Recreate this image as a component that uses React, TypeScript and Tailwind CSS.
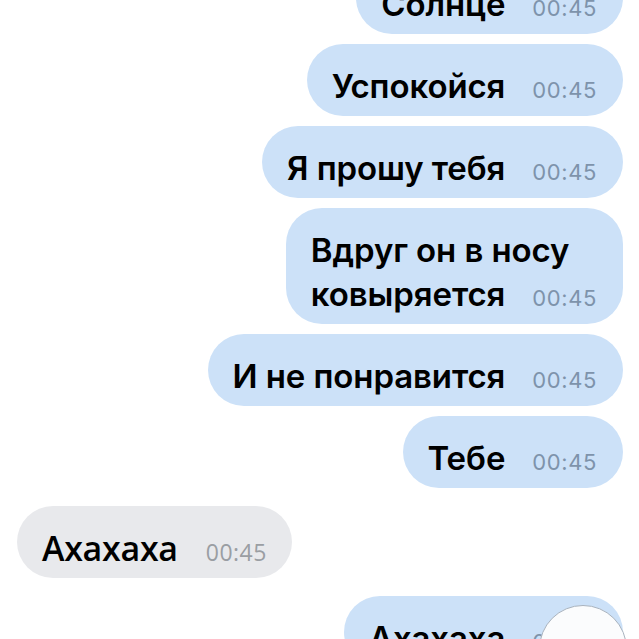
import React from "react";

type Msg = {
  lines: string[];
  out: boolean;
  time: string;
};

const MESSAGES: Msg[] = [
  { lines: ["Солнце"], out: true, time: "00:45" },
  { lines: ["Успокойся"], out: true, time: "00:45" },
  { lines: ["Я прошу тебя"], out: true, time: "00:45" },
  { lines: ["Вдруг он в носу", "ковыряется"], out: true, time: "00:45" },
  { lines: ["И не понравится"], out: true, time: "00:45" },
  { lines: ["Тебе"], out: true, time: "00:45" },
  { lines: ["Ахахаха"], out: false, time: "00:45" },
  { lines: ["Ахахаха"], out: true, time: "00:45" },
];

function Bubble({ msg }: { msg: Msg }) {
  const last = msg.lines.length - 1;

  if (!msg.out) {
    return (
      <div className="rounded-[36px] bg-[#e8e9ec] pl-[25px] pr-[25px] pt-[20px] pb-[8px] font-['Open_Sans',sans-serif]">
        <div className="flex items-baseline">
          <span className="text-[34px] leading-[44px] font-semibold tracking-[-0.3px] text-black">
            {msg.lines[0]}
          </span>
          <span className="ml-[28px] text-[23px] tracking-[0.5px] text-[#9a9ea3]">
            {msg.time}
          </span>
        </div>
      </div>
    );
  }

  return (
    <div className="rounded-[36px] bg-[#cce1f8] pl-[25px] pr-[26px] pt-[20px] pb-[8px] font-['Inter',sans-serif]">
      {msg.lines.map((line, i) =>
        i < last ? (
          <div
            key={i}
            className="text-[33px] leading-[44px] font-semibold text-black tracking-[-0.1px]"
          >
            {line}
          </div>
        ) : (
          <div key={i} className="flex items-baseline">
            <span className="text-[33px] leading-[44px] font-semibold text-black tracking-[-0.1px]">
              {line}
            </span>
            <span className="ml-[27px] text-[22px] tracking-[0.6px] text-[#7e93ab]">
              {msg.time}
            </span>
          </div>
        ),
      )}
    </div>
  );
}

export default function App() {
  return (
    <div className="relative h-[639px] w-[639px] overflow-hidden bg-white">
      <div className="-mt-[38px] flex flex-col items-end pl-[17px] pr-[16px]">
        {MESSAGES.map((m, i) => {
          const prev = MESSAGES[i - 1];
          const gap = !prev ? "" : prev.out !== m.out || !m.out ? "mt-[18px]" : "mt-[10px]";
          return (
            <div key={i} className={`${gap} ${m.out ? "" : "self-start"}`}>
              <Bubble msg={m} />
            </div>
          );
        })}
      </div>

      {/* scroll-down button */}
      <div className="absolute left-[539px] top-[605px] h-[88px] w-[88px] rounded-full border border-[#a9b3be] bg-[#fbfcfd]" />
    </div>
  );
}
